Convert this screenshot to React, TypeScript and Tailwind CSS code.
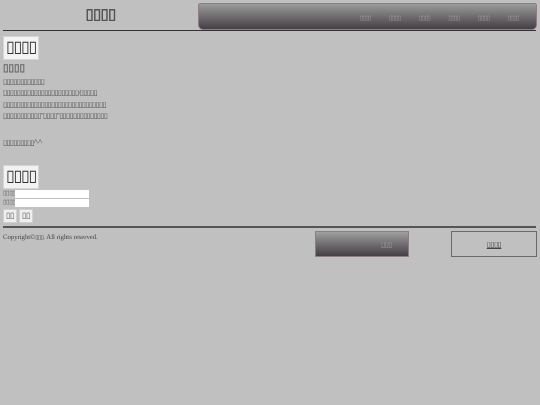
const T = '\u25AF'
const box = (n: number) => T.repeat(n)

function NavItem() {
  return <span className="w-[29.6px] text-center text-[6.5px] tracking-[-0.7px] leading-none text-[#9a9a9a] grayscale">{box(4)}</span>
}

function BoxTitle() {
  return (
    <div className="w-[36px] h-[24px] flex items-center justify-center bg-[#f2f2f2] border border-[#d4d4d4] text-[16px] tracking-[-1.3px] leading-none text-[#333] grayscale">
      {box(4)}
    </div>
  )
}

function LoginRow() {
  return (
    <div className="flex items-center h-[8px] text-[6.5px] tracking-[-0.5px] text-[#666]">
      <span className="w-[12px] whitespace-nowrap">{box(4)}:</span>
      <div className="w-[74px] h-[8px] bg-white" />
    </div>
  )
}

function SmallButton() {
  return (
    <button className="w-[14px] h-[14px] flex items-center justify-center bg-[#efefef] border border-[#d0d0d0] text-[8px] tracking-[-0.4px] leading-none text-[#555]">
      {box(2)}
    </button>
  )
}

export default function App() {
  return (
    <div className="w-[540px] h-[405px] bg-[#c0c0c0] [text-rendering:geometricPrecision] font-['Liberation_Serif',serif] text-[#444] overflow-hidden">
      <header className="flex items-start pt-[3px] pl-[3px] pr-[3px] h-[30px]">
        <h1 className="w-[195px] h-[25px] flex items-center justify-center text-[15px] tracking-[-0.7px] font-bold leading-none text-[#555] grayscale">{box(4)}</h1>
        <nav className="w-[339px] h-[27px] flex items-center justify-end pr-[8px] pt-[5px] rounded-t-[2px] rounded-b-[5px] border border-[#8d7f88] bg-gradient-to-b from-[#9c9c9c] to-[#454045]">
          <NavItem /><NavItem /><NavItem /><NavItem /><NavItem /><NavItem />
        </nav>
      </header>
      <div className="ml-[3px] w-[533px] h-px bg-[#333]" />

      <main className="pl-[3px] pt-[5px] grayscale">
        <BoxTitle />
        <p className="mt-[3px] text-[10px] leading-[12px] font-bold text-[#666]">{box(4)}</p>
        <div className="mt-[1px] text-[7.5px] tracking-[-0.7px] leading-[11.3px] text-[#555]">
          <p>{box(12)}</p>
          <p>{box(22)}/{box(5)}</p>
          <p>{box(30)}</p>
          <p>{box(11)}"{box(4)}"{box(14)}</p>
        </div>
        <p className="mt-[16px] text-[7.5px] tracking-[-0.7px] leading-[11px] text-[#555]">{box(9)}<span className="text-[9px] tracking-normal leading-none">^^</span></p>
        <div className="mt-[17px]"><BoxTitle /></div>
        <div className="mt-px"><LoginRow /></div>
        <div className="mt-px"><LoginRow /></div>
        <div className="flex gap-[2px] mt-[2px]"><SmallButton /><SmallButton /></div>
      </main>

      <div className="ml-[3px] mt-[3px] w-[533px] h-[2px] bg-[#555]" />

      <footer className="flex items-start pl-[3px] pt-[3px]">
        <p className="w-[312px] pt-[2px] text-[6.7px] leading-[10px] text-[#444] grayscale">Copyright©<span className="text-[6px] tracking-[-0.6px]">{box(3)}</span>. All rights reserved.</p>
        <div className="w-[94px] h-[26px] flex items-center justify-end pt-[1px] pr-[16px] border border-[#8d7f88] bg-gradient-to-b from-[#a0a0a0] to-[#454045]">
          <span className="text-[7.5px] tracking-[-0.5px] text-[#9a9a9a] grayscale">{box(3)}</span>
        </div>
        <div className="ml-[42px] w-[86px] h-[26px] flex items-center justify-center pt-[1px] border border-[#6a6a6a]">
          <span className="text-[7.5px] tracking-[-0.5px] text-[#444] underline grayscale">{box(4)}</span>
        </div>
      </footer>
    </div>
  )
}
